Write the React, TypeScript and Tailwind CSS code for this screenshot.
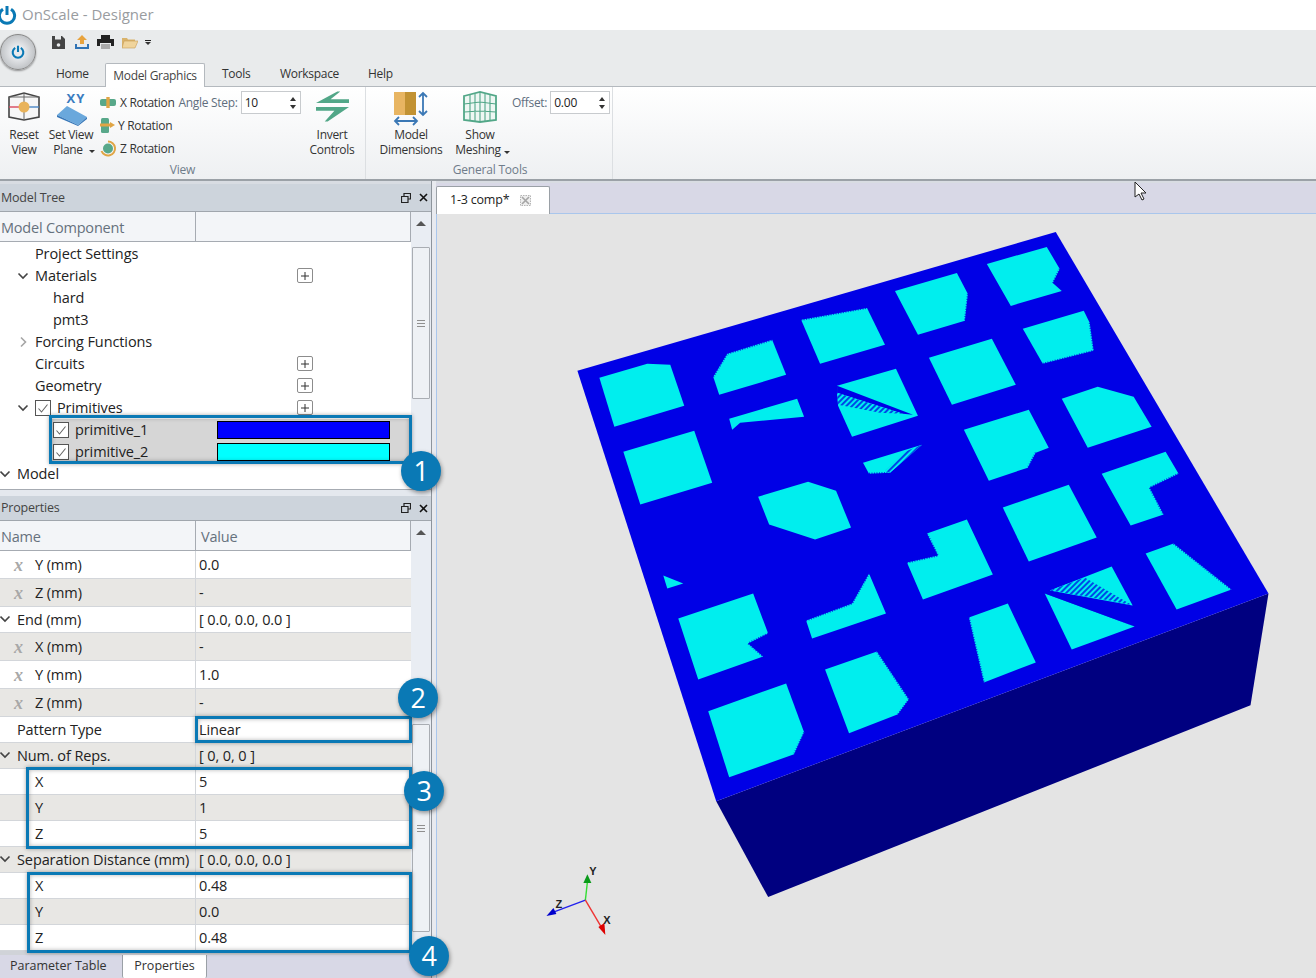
import React from "react";

const cyan = [
  "599,377 647,363 670,364 684,405 614,426",
  "713,376 727,353 772,339 786,374 719,394",
  "801,319 867,307 885,344 820,363",
  "895,290 957,272 968,293 965,320 918,334",
  "987,263 1047,246 1060,268 1053,282 1062,290 1011,305",
  "623,451 694,430 712,482 640,504",
  "729,418 797,398 804,416 740,422 732,429",
  "837,385 896,368 918,415 852,436 838,405",
  "929,357 992,338 1016,384 952,404",
  "1023,328 1084,310 1090,322 1094,350 1043,363",
  "758,496 808,481 836,490 851,527 815,539 769,524",
  "863,462 922,444 890,472 869,473",
  "964,429 1029,409 1049,447 1036,452 1028,467 989,480",
  "1062,398 1098,386 1134,396 1152,426 1088,447",
  "1102,473 1166,451 1179,473 1150,487 1164,514 1131,525",
  "663,575 683,583 667,588",
  "806,620 852,603 869,573 886,613 812,638",
  "907,562 938,555 927,533 967,519 993,574 923,599",
  "1003,507 1069,484 1097,537 1029,561",
  "969,617 1008,603 1036,662 984,682",
  "1045,593 1135,626 1072,649",
  "1050,590 1112,566 1133,605",
  "1146,553 1174,543 1232,589 1177,609",
  "678,618 753,593 768,633 748,643 763,656 698,679",
  "825,669 877,651 909,699 898,714 849,733",
  "708,711 786,683 804,732 794,754 729,777",
];

// edges that look stair-stepped in the mesh
const fuzzy = [
  "M713 376 727 353 772 339",
  "M801 319 867 307",
  "M968 293 965 320",
  "M1060 268 1053 282",
  "M1090 322 1094 350 1043 363",
  "M869 473 890 472",
  "M1036 452 1028 467",
  "M1179 473 1150 487 1164 514",
  "M806 620 852 603 869 573",
  "M907 562 938 555 927 533",
  "M969 617 984 682",
  "M1174 543 1232 589",
  "M768 633 748 643 763 656",
  "M877 651 909 699 898 714",
  "M804 732 794 754",
];

function Chevron({ open = true, className = "" }: any) {
  return (
    <svg width="12" height="12" viewBox="0 0 12 12" className={className}>
      {open ? (
        <path d="M1.5 3.5 6 8l4.5-4.5" fill="none" stroke="#444" strokeWidth="1.6" />
      ) : (
        <path d="M4 1.5 8.5 6 4 10.5" fill="none" stroke="#a5a5a5" strokeWidth="1.6" />
      )}
    </svg>
  );
}

function Check({ className = "" }: any) {
  return (
    <div className={`w-[16px] h-[16px] border border-[#555] bg-white flex items-center justify-center shrink-0 ${className}`}>
      <svg width="12" height="12" viewBox="0 0 12 12">
        <path d="M1.5 6.5 4.5 10 10.5 2.5" fill="none" stroke="#666" strokeWidth="1.1" />
      </svg>
    </div>
  );
}

function Plus() {
  return (
    <div className="absolute left-[297px] top-[3px] w-[16px] h-[15px] border border-[#8c8c8c] rounded-[2px] bg-white flex items-center justify-center">
      <svg width="8" height="8" viewBox="0 0 8 8">
        <path d="M4 0v8M0 4h8" stroke="#333" strokeWidth="1" />
      </svg>
    </div>
  );
}

function TreeRow({ children, plus }: any) {
  return (
    <div className="relative h-[22px] flex items-center text-[14.5px] tracking-[-0.1px] text-[#222]">
      {children}
      {plus && <Plus />}
    </div>
  );
}

function Spin() {
  return (
    <div className="flex flex-col items-center gap-[4px] mr-[4px]">
      <div className="w-0 h-0 border-x-[3px] border-x-transparent border-b-[4px] border-b-[#333]" />
      <div className="w-0 h-0 border-x-[3px] border-x-transparent border-t-[4px] border-t-[#333]" />
    </div>
  );
}

function Caret({ className = "" }: any) {
  return <div className={`w-0 h-0 border-x-[3px] border-x-transparent border-t-[3px] border-t-[#333] ${className}`} />;
}

function Scrollbar({ thumb }: any) {
  return (
    <div className="w-[20px] shrink-0 bg-[#e9edf3] flex flex-col items-center">
      <div className="h-[22px] w-full flex items-center justify-center">
        <div className="w-0 h-0 border-x-[5px] border-x-transparent border-b-[5px] border-b-[#555]" />
      </div>
      <div className={`w-[18px] border border-[#a9adb3] rounded-[1px] bg-[#eef1f5] flex items-center justify-center ${thumb}`}>
        <div className="w-[8px] h-[7px] border-y border-[#8f8f8f] flex items-center">
          <div className="w-full h-px bg-[#8f8f8f]" />
        </div>
      </div>
    </div>
  );
}

function PanelHead({ title, h, titleClass = "" }: any) {
  return (
    <div className={`bg-[#cdd4dc] flex items-center justify-between text-[12.5px] text-[#444] pl-[1px] pr-[3px] shrink-0 ${h}`}>
      <span className={titleClass}>{title}</span>
      <div className="flex items-center gap-[8px]">
        <svg width="10" height="10" viewBox="0 0 10 10">
          <path d="M3 3V.5h6.5V6H7M.5 3.5H7v6H.5z" fill="none" stroke="#222" strokeWidth="1.2" />
        </svg>
        <svg width="9" height="9" viewBox="0 0 9 9">
          <path d="M1 1l7 7M8 1 1 8" stroke="#111" strokeWidth="1.6" />
        </svg>
      </div>
    </div>
  );
}

function PropRow({ name, value, h = "h-[26px]", alt, fx, chev, indent }: any) {
  return (
    <div className={`flex border-b border-[#d3d6da] text-[14.5px] tracking-[-0.1px] text-[#222] ${h} ${alt ? "bg-[#e8e7e4]" : "bg-white"}`}>
      <div className="w-[196px] shrink-0 border-r border-[#d3d6da] flex items-center relative">
        {chev && <Chevron className="absolute left-[-1px] top-[6px]" />}
        {fx && <span className="absolute left-[14px] font-['Liberation_Serif'] italic font-bold text-[18px] leading-[18px] text-[#a8a8a8]">x</span>}
        <span className={indent ? "ml-[35px]" : "ml-[17px]"}>{name}</span>
      </div>
      <div className="flex-1 flex items-center pl-[3px]">{value}</div>
    </div>
  );
}

function Badge({ n, className }: any) {
  return (
    <div className={`absolute w-[40px] h-[40px] rounded-full bg-[#0a79b5] text-white text-[27px] flex items-center justify-center shadow-[1px_2px_4px_rgba(0,0,0,0.4)] ${className}`}>
      {n}
    </div>
  );
}

function Box({ className }: any) {
  return <div className={`absolute border-[3px] border-[#0a79b5] shadow-[0_0_4px_rgba(0,0,0,0.35),inset_0_0_4px_rgba(0,0,0,0.3)] ${className}`} />;
}

function Label({ children, className = "" }: any) {
  return <div className={`text-[12px] leading-[15px] tracking-[-0.3px] text-[#333] text-center ${className}`}>{children}</div>;
}

function Rot({ icon, text, ml }: any) {
  return (
    <div className="flex items-center h-[23px]">
      <div className="w-[17px] h-[17px] shrink-0">{icon}</div>
      <span className={`text-[12px] tracking-[-0.3px] text-[#333] ${ml}`}>{text}</span>
    </div>
  );
}

function PowerIcon({ size, color }: any) {
  return (
    <svg width={size} height={size} viewBox="0 0 20 20">
      <path d="M6 4.2A7.6 7.6 0 1 0 14 4.2" fill="none" stroke={color} strokeWidth="3" strokeLinecap="butt" />
      <path d="M10 1v9" stroke={color} strokeWidth="3" />
    </svg>
  );
}

export default function App() {
  return (
    <div className="relative w-[1316px] h-[978px] overflow-hidden bg-white flex flex-col font-['Open_Sans',sans-serif] tracking-[-0.2px]">
      {/* title */}
      <div className="h-[30px] shrink-0 bg-white flex items-center">
        <div className="ml-[-3px]"><PowerIcon size={20} color="#0a79b5" /></div>
        <span className="ml-[5px] mt-[-2px] text-[15px] tracking-[0px] text-[#999c9f]">OnScale - Designer</span>
      </div>

      {/* quick access + tabs */}
      <div className="h-[57px] shrink-0 bg-[#e9ebec] flex border-b border-[#b4b9be]">
        <div className="w-[42px] shrink-0 relative">
          <div className="absolute left-0 top-[4px] w-[36px] h-[36px] rounded-full border border-[#888] bg-[radial-gradient(circle,#e8eaed_25%,#a9acaf_100%)] flex items-center justify-center shadow-[0_1px_2px_rgba(0,0,0,0.4)]">
            <PowerIcon size={14} color="#0a79b5" />
          </div>
        </div>
        <div className="flex-1 flex flex-col justify-between">
          <div className="flex items-center h-[20px] mt-[2px] ml-[9px] gap-[8px]">
            <svg width="15" height="15" viewBox="0 0 15 15">
              <path d="M1 1h10l3 3v10H1z" fill="#444" />
              <rect x="4" y="1" width="6" height="3.5" fill="#e9ebec" />
              <circle cx="7.5" cy="10" r="1.8" fill="#e9ebec" />
            </svg>
            <svg width="16" height="16" viewBox="0 0 16 16">
              <path d="M8 1l5 5h-3v4H6V6H3z" fill="#e8a33d" />
              <path d="M1 10v5h14v-5h-2v3H3v-3z" fill="#2f73b5" />
            </svg>
            <svg width="17" height="14" viewBox="0 0 17 14" className="ml-[-1px]">
              <path d="M4 0h9v4H4zM0 4h17v7h-3V8H3v3H0z" fill="#222" />
              <path d="M4 9h9v5H4z" fill="#aaa" />
            </svg>
            <svg width="16" height="13" viewBox="0 0 16 13">
              <path d="M0 2h5l1 1.5h7V12H0z" fill="#d9b36c" />
              <path d="M2 5h14l-3 7H0z" fill="#f0d49c" stroke="#c79c55" strokeWidth=".6" />
            </svg>
            <div className="flex flex-col items-center gap-[1px] ml-[-1px]">
              <div className="w-[6px] h-px bg-[#222]" />
              <Caret className="border-t-[#222]" />
            </div>
          </div>
          <div className="flex items-end h-[24px] text-[12px] tracking-[-0.3px] text-[#333] mb-[-1px]">
            <span className="ml-[14px] mb-[4px] w-[49px]">Home</span>
            <div className="w-[100px] h-[24px] bg-white border border-b-0 border-[#b4b9be] rounded-t-[2px] flex items-center justify-center text-[#444]">Model Graphics</div>
            <span className="ml-[17px] mb-[4px] w-[58px]">Tools</span>
            <span className="mb-[4px] w-[88px]">Workspace</span>
            <span className="mb-[4px]">Help</span>
          </div>
        </div>
      </div>

      {/* ribbon */}
      <div className="h-[94px] shrink-0 flex border-b-2 border-[#9ba1a7] bg-[linear-gradient(#ffffff,#eef0f2)]">
        <div className="w-[366px] shrink-0 border-r border-[#dcdfe2] flex flex-col">
          <div className="flex-1 flex pt-[4px]">
            <div className="w-[48px] shrink-0 flex flex-col items-center">
              <svg width="34" height="31" viewBox="0 0 34 31">
                <path d="M2 6 17 2l15 4v20l-15 3-15-3z" fill="#f6f6f6" stroke="#444" strokeWidth="1.6" />
                <path d="M2 6h30M17 2v27" stroke="#666" strokeWidth="1" />
                <path d="M2 16h10" stroke="#d8485c" strokeWidth="1.4" />
                <path d="M22 16h10" stroke="#4a86c5" strokeWidth="1.4" />
                <circle cx="17" cy="16" r="5.5" fill="#e9b35a" />
              </svg>
              <Label className="mt-[5px]">Reset<br />View</Label>
            </div>
            <div className="w-[46px] shrink-0 flex flex-col items-center relative">
              <span className="ml-[10px] text-[13px] leading-[15px] font-bold text-[#3a7cc0] tracking-[1px]">XY</span>
              <svg width="32" height="20" viewBox="0 0 32 20" className="ml-[1px]">
                <path d="M11 0 31 11l-9 8L1 9z" fill="#6aa8dc" />
                <path d="M1 9 22 19l9-8v2l-9 7L1 11z" fill="#3576b8" />
              </svg>
              <Label className="mt-[1px] whitespace-nowrap">Set View<br /><span className="mr-[6px]">Plane</span></Label>
              <Caret className="absolute left-[41px] top-[59px]" />
            </div>
            <div className="w-[202px] shrink-0 flex flex-col ml-[6px]">
              <div className="flex items-center h-[23px]">
                <Rot
                  icon={
                    <svg width="17" height="17" viewBox="0 0 17 17">
                      <rect x="0" y="5" width="16" height="7" rx="2" fill="#58a88a" />
                      <path d="M8 3v11" stroke="#e0a545" strokeWidth="3.4" />
                    </svg>
                  }
                  text="X Rotation"
                  ml="ml-[3px]"
                />
                <span className="ml-[4px] text-[12px] tracking-[-0.3px] text-[#5f6e7e]">Angle Step:</span>
                <div className="ml-[3px] w-[60px] h-[23px] border border-[#c8cbce] bg-white flex items-center justify-between pl-[3px] text-[12px] text-[#222]">
                  10
                  <Spin />
                </div>
              </div>
              <Rot
                icon={
                  <svg width="17" height="17" viewBox="0 0 17 17">
                    <rect x="1" y="1" width="8" height="15" rx="1.5" fill="#58a88a" />
                    <path d="M0 8h10" stroke="#e0a545" strokeWidth="3" />
                    <path d="M10 5l5 3-5 3z" fill="#e0a545" />
                  </svg>
                }
                text="Y Rotation"
                ml="ml-[1px]"
              />
              <Rot
                icon={
                  <svg width="17" height="17" viewBox="0 0 17 17">
                    <circle cx="8" cy="8.5" r="5" fill="#58a88a" />
                    <path d="M8 1.5a7 7 0 1 1-6.5 9.5" fill="none" stroke="#e0a545" strokeWidth="2" />
                  </svg>
                }
                text="Z Rotation"
                ml="ml-[3px]"
              />
            </div>
            <div className="w-[60px] shrink-0 flex flex-col items-center">
              <svg width="33" height="31" viewBox="0 0 34 31">
                <path d="M0 12 22 0h3l-10 8h19v4z" fill="#52a788" />
                <path d="M0 16h34L12 31H9l10-11H0z" fill="#52a788" />
              </svg>
              <Label className="mt-[5px]">Invert<br />Controls</Label>
            </div>
          </div>
          <div className="h-[18px] text-center text-[12px] text-[#6f7c8a]">View</div>
        </div>
        <div className="w-[247px] shrink-0 border-r border-[#dcdfe2] flex flex-col">
          <div className="flex-1 flex pt-[4px]">
            <div className="w-[84px] ml-[3px] shrink-0 flex flex-col items-center">
              <svg width="36" height="35" viewBox="0 0 36 35">
                <rect x="1" y="1" width="11" height="23" fill="#e8b562" />
                <rect x="12" y="1" width="11" height="23" fill="#c29233" />
                <path d="M30 2v22M26 6l4-4 4 4M26 20l4 4 4-4M2 30h22M6 26l-4 4 4 4M20 26l4 4-4 4" fill="none" stroke="#3b78b5" strokeWidth="1.8" />
              </svg>
              <Label className="mt-[1px]">Model<br />Dimensions</Label>
            </div>
            <div className="w-[54px] shrink-0 flex flex-col items-center relative">
              <svg width="34" height="32" viewBox="0 0 34 32">
                <path d="M1 5 17 1l16 4v24l-16 2-16-2z" fill="#eef7f3" stroke="#52a788" strokeWidth="1.8" />
                <path d="M7 4v26M12 3v27M22 3v27M27 4v26M1 13l16-2 16 2M1 21l16-1 16 1M17 1v30" fill="none" stroke="#52a788" strokeWidth="1.1" />
              </svg>
              <Label className="mt-[4px] whitespace-nowrap"><span>Show</span><br /><span className="mr-[4px]">Meshing</span></Label>
              <Caret className="absolute left-[51px] top-[60px]" />
            </div>
            <div className="flex items-start ml-[5px]">
              <span className="text-[12px] tracking-[-0.3px] text-[#5f6e7e] mt-[3px]">Offset:</span>
              <div className="ml-[3px] w-[60px] h-[23px] border border-[#c8cbce] bg-white flex items-center justify-between pl-[3px] text-[12px] text-[#222]">
                0.00
                <Spin />
              </div>
            </div>
          </div>
          <div className="h-[18px] pl-[2px] text-center text-[12px] text-[#6f7c8a]">General Tools</div>
        </div>
      </div>

      {/* workspace */}
      <div className="flex-1 flex min-h-0 bg-[#d8dce2]">
        <div className="w-[432px] shrink-0 flex flex-col border-r border-[#8d949c]">
          <div className="h-[3px] shrink-0" />
          <PanelHead title="Model Tree" titleClass="mt-[2px]" h="h-[28px] border-b border-[#a0a6ad]" />
          <div className="h-[278px] shrink-0 flex bg-white border-b border-[#a6abb2]">
            <div className="w-[411px] shrink-0 flex flex-col">
              <div className="h-[30px] shrink-0 flex bg-[#f3f5f8] border-b border-[#a6abb2] border-r text-[14.5px] text-[#66717d]">
                <div className="w-[196px] border-r border-[#a6abb2] flex items-center pl-[1px] pt-[2px]">Model Component</div>
              </div>
              <div className="pt-[1px]">
                <TreeRow><span className="ml-[35px]">Project Settings</span></TreeRow>
                <TreeRow plus><Chevron className="ml-[17px]" /><span className="ml-[6px]">Materials</span></TreeRow>
                <TreeRow><span className="ml-[53px]">hard</span></TreeRow>
                <TreeRow><span className="ml-[53px]">pmt3</span></TreeRow>
                <TreeRow><Chevron open={false} className="ml-[17px]" /><span className="ml-[6px]">Forcing Functions</span></TreeRow>
                <TreeRow plus><span className="ml-[35px]">Circuits</span></TreeRow>
                <TreeRow plus><span className="ml-[35px]">Geometry</span></TreeRow>
                <TreeRow plus><Chevron className="ml-[17px]" /><Check className="ml-[6px]" /><span className="ml-[6px]">Primitives</span></TreeRow>
                <TreeRow>
                  <div className="ml-[52px] w-[358px] h-[22px] bg-[#d6d6d6] flex items-center">
                    <Check className="ml-[1px]" />
                    <span className="ml-[6px] w-[142px]">primitive_1</span>
                    <div className="w-[173px] h-[18px] bg-[#0000ff] border border-black" />
                  </div>
                </TreeRow>
                <TreeRow>
                  <div className="ml-[52px] w-[358px] h-[22px] bg-[#d6d6d6] flex items-center">
                    <Check className="ml-[1px]" />
                    <span className="ml-[6px] w-[142px]">primitive_2</span>
                    <div className="w-[173px] h-[18px] bg-[#00ffff] border border-black" />
                  </div>
                </TreeRow>
                <TreeRow><Chevron className="ml-[-1px]" /><span className="ml-[6px]">Model</span></TreeRow>
              </div>
            </div>
            <Scrollbar thumb="mt-[13px] h-[152px]" />
          </div>
          <div className="h-[6px] shrink-0 bg-[#e4e8ee]" />
          <PanelHead title="Properties" h="h-[25px] border-b border-[#a0a6ad]" />
          <div className="h-[430px] shrink-0 flex bg-white">
            <div className="w-[411px] shrink-0 flex flex-col">
              <div className="h-[30px] shrink-0 flex bg-[#f3f5f8] border-b border-r border-[#a6abb2] text-[14.5px] text-[#66717d]">
                <div className="w-[196px] border-r border-[#a6abb2] flex items-center pl-[1px] pt-[2px]">Name</div>
                <div className="flex items-center pl-[5px] pt-[2px]">Value</div>
              </div>
              <PropRow h="h-[28px]" fx indent name="Y (mm)" value="0.0" />
              <PropRow h="h-[28px]" fx indent alt name="Z (mm)" value="-" />
              <PropRow chev name="End (mm)" value="[ 0.0, 0.0, 0.0 ]" />
              <PropRow h="h-[28px]" fx indent alt name="X (mm)" value="-" />
              <PropRow h="h-[28px]" fx indent name="Y (mm)" value="1.0" />
              <PropRow h="h-[28px]" fx indent alt name="Z (mm)" value="-" />
              <PropRow name="Pattern Type" value="Linear" />
              <PropRow chev alt name="Num. of Reps." value="[ 0, 0, 0 ]" />
              <PropRow indent name="X" value="5" />
              <PropRow indent alt name="Y" value="1" />
              <PropRow indent name="Z" value="5" />
              <PropRow chev alt name="Separation Distance (mm)" value="[ 0.0, 0.0, 0.0 ]" />
              <PropRow indent name="X" value="0.48" />
              <PropRow indent alt name="Y" value="0.0" />
              <PropRow indent name="Z" value="0.48" />
            </div>
            <Scrollbar thumb="mt-[181px] h-[208px]" />
          </div>
          <div className="h-[4px] shrink-0 bg-[#d0d3d8]" />
          <div className="flex-1 flex bg-[#d8d8e6] text-[12.5px] tracking-[0px] text-[#333]">
            <div className="w-[122px] flex items-center pl-[10px]">Parameter Table</div>
            <div className="w-[85px] bg-white border-x border-[#9aa0a6] rounded-b-[2px] flex items-center justify-center">Properties</div>
          </div>
        </div>

        <div className="w-[4px] shrink-0 bg-[#e8eaef]" />

        <div className="flex-1 flex flex-col min-w-0">
          <div className="h-[31px] shrink-0 bg-[#d8d8e6] flex items-end border-b border-[#a9c6ec] mt-[2px]">
            <div className="w-[114px] h-[28px] bg-white border-x border-t border-[#9aa0a6] rounded-t-[2px] flex items-center text-[12.5px] text-[#222] mb-[-1px]">
              <span className="ml-[13px]">1-3 comp*</span>
              <svg width="11" height="11" viewBox="0 0 11 11" className="ml-[11px]">
                <rect x=".5" y=".5" width="10" height="10" fill="#eee" stroke="#b5b5b5" strokeDasharray="1.5 1" />
                <path d="M2 2l7 7M9 2 2 9" stroke="#a5a5a5" strokeWidth="1.6" />
              </svg>
            </div>
          </div>
          <div className="flex-1 bg-[#e4e4e4] border-l border-[#a9c6ec] min-h-0">
            <svg viewBox="437 213 879 765" className="w-full h-full block">
              <defs>
                <pattern id="hatch" width="4" height="4" patternUnits="userSpaceOnUse" patternTransform="rotate(-45)">
                  <rect width="4" height="4" fill="#00eeee" />
                  <rect width="4" height="2" fill="#0000e6" opacity="0.7" />
                </pattern>
              </defs>
              <polygon points="716,801 1269,593 1251,705 768,897" fill="#000080" />
              <polygon points="577,370 1056,231 1269,593 716,801" fill="#0000e6" />
              {cyan.map((p, i) => (
                <polygon key={i} points={p} fill="#00eeee" />
              ))}
              {fuzzy.map((d, i) => (
                <path key={i} d={d} fill="none" stroke="#0000e6" strokeWidth="2" strokeDasharray="1 1.5" opacity="0.75" />
              ))}
              <polygon points="837,385 913,414 903,413 837,392" fill="#0000e6" />
              <polygon points="837,392 903,413 880,412 838,404" fill="url(#hatch)" />
              <polygon points="1050,590 1085,577 1133,605 1110,600" fill="url(#hatch)" />
              <polygon points="1045,593 1135,626 1120,620 1052,590" fill="#0000e6" opacity="0.6" />
              <polygon points="905,451 922,444 890,472 885,470" fill="url(#hatch)" />
              <path d="M585 900 587 882" stroke="#33dd33" strokeWidth="1.4" />
              <path d="M587 874 591 883 583 883z" fill="#0a9a1a" />
              <path d="M585 900 553 912" stroke="#2222ee" strokeWidth="1.4" />
              <path d="M546 916 553 908 556 914z" fill="#0000cc" />
              <path d="M585 900 601 927" stroke="#ee3333" strokeWidth="1.4" />
              <path d="M605 935 598 927 604 923z" fill="#dd0000" />
              <text x="589" y="875" fontSize="11" fontWeight="700" fill="#222" fontFamily="Liberation Sans">Y</text>
              <text x="555" y="908" fontSize="11" fontWeight="700" fill="#222" fontFamily="Liberation Sans">Z</text>
              <text x="603" y="924" fontSize="11" fontWeight="700" fill="#222" fontFamily="Liberation Sans">X</text>
            </svg>
          </div>
        </div>
      </div>

      {/* annotations */}
      <Box className="left-[49px] top-[415px] w-[363px] h-[49px]" />
      <Box className="left-[195px] top-[716px] w-[217px] h-[27px]" />
      <Box className="left-[26px] top-[767px] w-[386px] h-[82px]" />
      <Box className="left-[27px] top-[872px] w-[385px] h-[81px]" />
      <Badge n="1" className="left-[401px] top-[451px]" />
      <Badge n="2" className="left-[398px] top-[678px]" />
      <Badge n="3" className="left-[404px] top-[771px]" />
      <Badge n="4" className="left-[409px] top-[936px]" />

      <svg width="13" height="20" viewBox="0 0 13 20" className="absolute left-[1134px] top-[181px]">
        <path d="M1 1v15l4-3 3 6 2-1-3-6h5z" fill="#fff" stroke="#222" strokeWidth="1" />
      </svg>
    </div>
  );
}
